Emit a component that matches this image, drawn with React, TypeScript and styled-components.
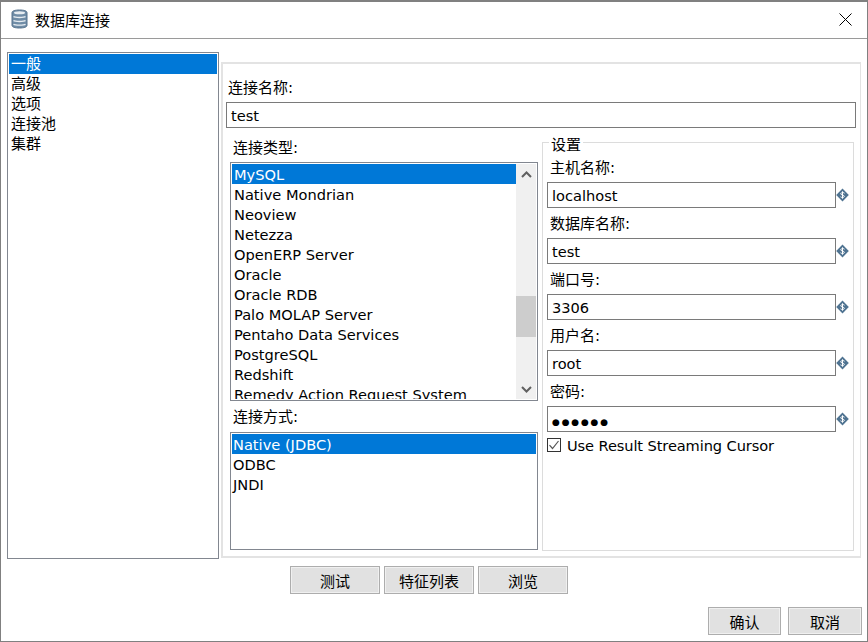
import React from 'react';
import styled, { createGlobalStyle } from 'styled-components';

const GlobalStyle = createGlobalStyle`
    html, body {
        margin: 0;
        padding: 0;
        background: #ffffff;
    }
    body {
        font-family: "DejaVu Sans", "Noto Sans CJK SC", sans-serif;
        font-size: 14.6px;
        color: #000000;
    }
`;

const Window = styled.div`
    width: 868px;
    height: 642px;
    box-sizing: border-box;
    border: 1px solid #808080;
    border-top-width: 2px;
    display: flex;
    flex-direction: column;
    overflow: hidden;
`;

const TitleBar = styled.div`
    height: 37px;
    flex: none;
    box-sizing: border-box;
    border-bottom: 1px solid #9a9a9a;
    display: flex;
    align-items: center;
    padding: 0 0 2px 10px;
`;

const TitleText = styled.span`
    margin-left: 7px;
    font-size: 15px;
    flex: 1;
`;

const CloseButton = styled.button`
    width: 46px;
    height: 34px;
    border: none;
    background: none;
    padding: 0 0 0 2px;
    display: flex;
    align-items: center;
    justify-content: center;
`;

const Main = styled.div`
    display: flex;
    margin: 13px 6px 0 6px;
    height: 507px;
    flex: none;
`;

const Box = styled.div`
    box-sizing: border-box;
    border: 1px solid #828790;
    background: #fff;
    padding: 1px;
    overflow: hidden;
`;

const NavList = styled(Box)`
    width: 212px;
    height: 507px;
    flex: none;
`;

const Row = styled.div<{ $selected?: boolean; $pad?: number }>`
    height: 20px;
    line-height: 22px;
    padding-left: ${p => p.$pad ?? 2}px;
    white-space: nowrap;
    background: ${p => (p.$selected ? '#0078d7' : 'transparent')};
    color: ${p => (p.$selected ? '#ffffff' : '#000000')};
`;

const NavRow = styled(Row)`
    font-size: 15px;
    line-height: 21px;
`;

const Panel = styled.div`
    box-sizing: border-box;
    width: 640px;
    height: 496px;
    margin: 10px 0 0 2px;
    border: 2px solid #e3e3e3;
    border-right-width: 1px;
    padding: 0 4px 0 3px;
    display: flex;
    flex-direction: column;
`;

const FieldLabel = styled.div`
    height: 20px;
    line-height: 20px;
    font-size: 15px;
`;

const NameLabel = styled(FieldLabel)`
    margin: 14px 0 4px 2px;
`;

const TextField = styled.div`
    box-sizing: border-box;
    height: 26px;
    line-height: 26px;
    border: 1px solid #7a7a7a;
    padding-left: 4px;
    background: #fff;
    white-space: nowrap;
`;

const Columns = styled.div`
    display: flex;
    margin-top: 4px;
    padding-left: 4px;
    gap: 4px;
`;

const LeftColumn = styled.div`
    width: 308px;
    flex: none;
    display: flex;
    flex-direction: column;
`;

const TypeLabel = styled(FieldLabel)`
    margin: 6px 0 4px 3px;
`;

const MethodLabel = styled(FieldLabel)`
    margin: 6px 0 5px 3px;
`;

const TypeBox = styled(Box)`
    height: 239px;
    display: flex;
`;

const TypeRows = styled.div`
    flex: 1;
    overflow: hidden;
    min-width: 0;
`;

const ScrollTrack = styled.div`
    width: 20px;
    flex: none;
    background: #f0f0f0;
    display: flex;
    flex-direction: column;
    align-items: center;
`;

const ScrollArrow = styled.div`
    height: 20px;
    width: 100%;
    flex: none;
    display: flex;
    align-items: center;
    justify-content: center;
`;

const ScrollThumb = styled.div`
    width: 100%;
    height: 41px;
    margin-top: 112px;
    margin-bottom: auto;
    background: #cdcdcd;
`;

const MethodBox = styled(Box)`
    height: 118px;
`;

const Settings = styled.fieldset`
    box-sizing: border-box;
    width: 312px;
    height: 419px;
    margin: 0;
    padding: 0 0 0 4px;
    border: 1px solid #dcdcdc;
    min-inline-size: 0;
`;

const Legend = styled.legend`
    margin-left: 2px;
    padding: 0 2px;
    height: 20px;
    line-height: 26px;
    font-size: 15px;
`;

const SettingLabel = styled(FieldLabel)`
    margin: 6px 0 4px 3px;
`;

const FirstSettingLabel = styled(SettingLabel)`
    margin-top: 6px;
`;

const FieldRow = styled.div`
    display: flex;
    align-items: center;
`;

const SettingField = styled(TextField)`
    width: 289px;
    flex: none;
`;

const Dots = styled.span`
    font-size: 9px;
    letter-spacing: 1.8px;
`;

const IconSlot = styled.span`
    width: 13px;
    height: 14px;
    display: inline-flex;
    flex: none;
`;

const CheckRow = styled.label`
    display: flex;
    align-items: center;
    height: 14px;
    margin-top: 6px;
    letter-spacing: -0.1px;
`;

const CheckBoxMark = styled.span`
    box-sizing: border-box;
    width: 14px;
    height: 14px;
    border: 1px solid #333333;
    display: inline-flex;
    align-items: center;
    justify-content: center;
    flex: none;
    margin-right: 6px;
`;

const ActionRow = styled.div`
    display: flex;
    gap: 4px;
    margin: 7px 0 0 289px;
`;

const Footer = styled.div`
    display: flex;
    justify-content: flex-end;
    gap: 7px;
    margin: 13px 5px 0 0;
`;

const Button = styled.button<{ $width: number }>`
    box-sizing: border-box;
    width: ${p => p.$width}px;
    height: 28px;
    background: #e1e1e1;
    border: 1px solid #adadad;
    box-shadow: 0 0 0 1px #f0f0f0 inset;
    font: inherit;
    font-size: 15px;
    color: #000;
    padding: 0;
`;

const DatabaseIcon = () => (
    <svg width="17" height="20" viewBox="0 0 17 20">
        <path d="M1 3.5C1 1.8 4.4 1 8.5 1S16 1.8 16 3.5v13c0 1.7-3.4 2.500-7.500 2.500S1 18.200 1 16.500z" fill="#6f8ca6" stroke="#55718c" />
        <ellipse cx="8.5" cy="3.7" rx="5.5" ry="1.5" fill="#e6ecf1" />
        <path d="M2.500 7.500c1.500 1.300 10.500 1.300 12 0M2.500 11.500c1.500 1.300 10.500 1.300 12 0M2.500 15.200c1.500 1.300 10.500 1.300 12 0" fill="none" stroke="#e6ecf1" strokeWidth="1.300" />
    </svg>
);

const CloseIcon = () => (
    <svg width="13" height="13" viewBox="0 0 13 13">
        <path d="M.5.5l12 12M12.5.5l-12 12" stroke="#000" strokeWidth="1" />
    </svg>
);

const VariableIcon = () => (
    <svg width="13" height="14" viewBox="0 0 13 14">
        <path d="M6.5.5L12.800 7 6.500 13.500.2 7z" fill="#4f7391" />
        <path d="M8.500 5.200C8 4.400 5 4.200 4.700 5.700c-.2 1.600 3.800 1 3.600 2.800-.2 1.300-3 1.200-3.800.3M6.500 3.300v7.400" fill="none" stroke="#fff" strokeWidth="1" />
    </svg>
);

const ChevronIcon = ({ up }: { up?: boolean }) => (
    <svg width="11" height="7" viewBox="0 0 11 7">
        <path d={up ? 'M1 6l4.500-4.500L10 6' : 'M1 1l4.500 4.500L10 1'} fill="none" stroke="#606060" strokeWidth="2" />
    </svg>
);

const CheckIcon = () => (
    <svg width="12" height="12" viewBox="0 0 12 12">
        <path d="M1.500 6.200l3 3.300L10.500 2" fill="none" stroke="#555" strokeWidth="1.200" />
    </svg>
);

const navItems = ['一般', '高级', '选项', '连接池', '集群'];

const connectionTypes = [
    'MySQL',
    'Native Mondrian',
    'Neoview',
    'Netezza',
    'OpenERP Server',
    'Oracle',
    'Oracle RDB',
    'Palo MOLAP Server',
    'Pentaho Data Services',
    'PostgreSQL',
    'Redshift',
    'Remedy Action Request System',
];

const methods = ['Native (JDBC)', 'ODBC', 'JNDI'];

const settings = [
    { label: '数据库名称:', value: 'test' },
    { label: '端口号:', value: '3306' },
    { label: '用户名:', value: 'root' },
];

const App: React.FC = () => {
    return (
        <Window>
            <GlobalStyle />
            <TitleBar>
                <DatabaseIcon />
                <TitleText>数据库连接</TitleText>
                <CloseButton><CloseIcon /></CloseButton>
            </TitleBar>
            <Main>
                <NavList>
                    {navItems.map((item, i) => (
                        <NavRow key={item} $selected={i === 0}>{item}</NavRow>
                    ))}
                </NavList>
                <Panel>
                    <NameLabel>连接名称:</NameLabel>
                    <TextField>test</TextField>
                    <Columns>
                        <LeftColumn>
                            <TypeLabel>连接类型:</TypeLabel>
                            <TypeBox>
                                <TypeRows>
                                    {connectionTypes.map((item, i) => (
                                        <Row key={item} $selected={i === 0}>{item}</Row>
                                    ))}
                                </TypeRows>
                                <ScrollTrack>
                                    <ScrollArrow><ChevronIcon up /></ScrollArrow>
                                    <ScrollThumb />
                                    <ScrollArrow><ChevronIcon /></ScrollArrow>
                                </ScrollTrack>
                            </TypeBox>
                            <MethodLabel>连接方式:</MethodLabel>
                            <MethodBox>
                                {methods.map((item, i) => (
                                    <Row key={item} $selected={i === 0} $pad={1}>{item}</Row>
                                ))}
                            </MethodBox>
                        </LeftColumn>
                        <Settings>
                            <Legend>设置</Legend>
                            <FirstSettingLabel>主机名称:</FirstSettingLabel>
                            <FieldRow>
                                <SettingField>localhost</SettingField>
                                <IconSlot><VariableIcon /></IconSlot>
                            </FieldRow>
                            {settings.map(item => (
                                <React.Fragment key={item.label}>
                                    <SettingLabel>{item.label}</SettingLabel>
                                    <FieldRow>
                                        <SettingField>{item.value}</SettingField>
                                        <IconSlot><VariableIcon /></IconSlot>
                                    </FieldRow>
                                </React.Fragment>
                            ))}
                            <SettingLabel>密码:</SettingLabel>
                            <FieldRow>
                                <SettingField><Dots>●●●●●●</Dots></SettingField>
                                <IconSlot><VariableIcon /></IconSlot>
                            </FieldRow>
                            <CheckRow>
                                <CheckBoxMark><CheckIcon /></CheckBoxMark>
                                Use Result Streaming Cursor
                            </CheckRow>
                        </Settings>
                    </Columns>
                </Panel>
            </Main>
            <ActionRow>
                <Button $width={90}>测试</Button>
                <Button $width={90}>特征列表</Button>
                <Button $width={90}>浏览</Button>
            </ActionRow>
            <Footer>
                <Button $width={73}>确认</Button>
                <Button $width={74}>取消</Button>
            </Footer>
        </Window>
    );
};

export default App;
